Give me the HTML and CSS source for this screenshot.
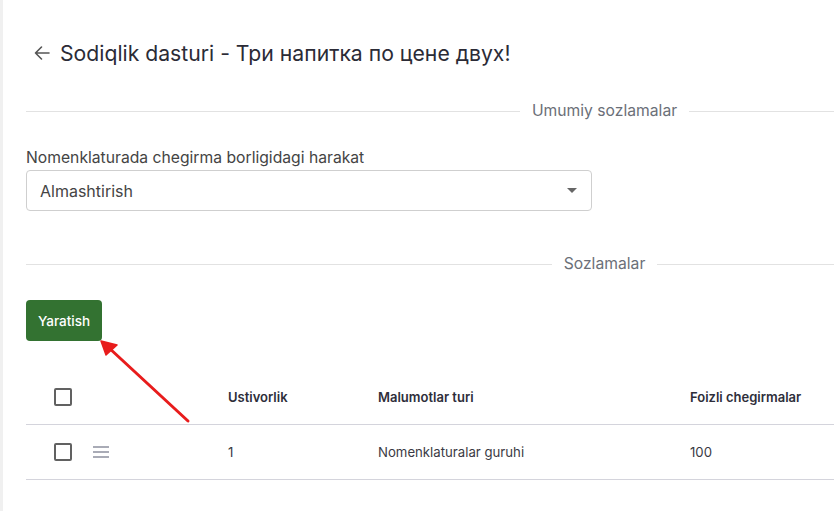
FILE: index.html
```html
<!DOCTYPE html>
<html lang="en">
<head>
<meta charset="UTF-8">
<title>Sodiqlik dasturi</title>
<link rel="stylesheet" href="styles.css">
</head>
<body>
<div class="page">
    <div class="content">
        <div class="title-row">
            <svg class="back" width="18" height="18" viewBox="0 0 18 18">
                <path d="M16 9H2.5M8.5 3L2.5 9l6 6" fill="none" stroke="#555" stroke-width="1.6" stroke-linecap="round" stroke-linejoin="round"/>
            </svg>
            <h1>Sodiqlik dasturi - Три напитка по цене двух!</h1>
        </div>

        <div class="divider"><span class="line"></span><span class="divider-label">Umumiy sozlamalar</span><span class="line"></span></div>

        <div class="form-grid">
            <div class="field">
                <label class="field-label">Nomenklaturada chegirma borligidagi harakat</label>
                <div class="select">
                    <span>Almashtirish</span>
                    <span class="caret"></span>
                </div>
            </div>
        </div>

        <div class="divider second"><span class="line"></span><span class="divider-label">Sozlamalar</span><span class="line"></span></div>

        <button class="btn-create">Yaratish</button>

        <div class="table">
            <div class="tr head">
                <div class="td first"><span class="checkbox"></span></div>
                <div class="td">Ustivorlik</div>
                <div class="td">Malumotlar turi</div>
                <div class="td">Foizli chegirmalar</div>
            </div>
            <div class="tr">
                <div class="td first"><span class="checkbox"></span><span class="drag"><i></i><i></i><i></i></span></div>
                <div class="td">1</div>
                <div class="td">Nomenklaturalar guruhi</div>
                <div class="td">100</div>
            </div>
        </div>
    </div>

    <!-- annotation arrow -->
    <svg class="pointer" width="120" height="110" viewBox="0 0 120 110">
        <line x1="107" y1="101" x2="27" y2="27" stroke="#e81c1c" stroke-width="3" stroke-linecap="round"/>
        <path d="M20 21L36 25L25 35Z" fill="#e81c1c" stroke="#e81c1c" stroke-width="1.5" stroke-linejoin="round"/>
    </svg>
</div>
</body>
</html>
```

FILE: styles.css
```css
html, body {
    margin: 0;
    background: #fff;
    overflow: hidden;
}
body {
    font-family: "Inter", "Roboto", sans-serif;
    color: #333;
}
.page {
    position: relative;
    min-height: 511px;
    border-left: 3px solid #f0f0f0;
    padding-left: 23px;
}
.content {
    width: 1157px;
}
.title-row {
    display: flex;
    align-items: center;
    gap: 9px;
    padding-top: 40px;
    padding-left: 7px;
}
.back { display: block; }
h1 {
    margin: 0;
    font-size: 21.2px;
    line-height: 26px;
    font-weight: 400;
    color: #2b2b36;
}
.divider {
    display: flex;
    align-items: center;
    gap: 12px;
    margin-top: 35px;
}
.divider.second { margin-top: 43px; }
.divider .line {
    flex: 1;
    height: 1px;
    background: #e2e2e2;
}
.divider-label {
    font-size: 15.7px;
    line-height: 20px;
    color: #6b6f78;
}
.form-grid {
    display: grid;
    grid-template-columns: 566px 1fr;
    margin-top: 27px;
}
.field-label {
    display: block;
    font-size: 15.7px;
    line-height: 20px;
    color: #444;
    margin-bottom: 2px;
}
.select {
    display: flex;
    align-items: center;
    justify-content: space-between;
    height: 39px;
    border: 1px solid #cfcfcf;
    border-radius: 4px;
    padding: 0 14px 0 13px;
    font-size: 16px;
    color: #444;
}
.caret {
    width: 0;
    height: 0;
    border-left: 5px solid transparent;
    border-right: 5px solid transparent;
    border-top: 5px solid #666;
}
.btn-create {
    display: block;
    margin-top: 26px;
    width: 76px;
    height: 41px;
    border: none;
    border-radius: 4px;
    background: #337231;
    color: #fff;
    font-family: "Inter", "Roboto", sans-serif;
    font-size: 13.5px;
    font-weight: 500;
    padding: 0;
}
.table {
    margin-top: 29px;
}
.tr {
    display: grid;
    grid-template-columns: 202px 150px 312px 1fr;
    align-items: center;
    height: 54px;
    border-bottom: 1px solid #d4d4dc;
    font-size: 13.2px;
    color: #3a3a44;
}
.tr.head {
    font-weight: 600;
    font-size: 13px;
    color: #2e2e3a;
}
.td.first {
    display: flex;
    align-items: center;
    gap: 21px;
    padding-left: 28px;
}
.checkbox {
    width: 14px;
    height: 14px;
    border: 2px solid #616161;
    border-radius: 2px;
}
.drag {
    display: flex;
    flex-direction: column;
    gap: 3px;
    width: 16px;
}
.drag i {
    display: block;
    height: 2px;
    background: #a9abb6;
}
.pointer {
    position: absolute;
    left: 78px;
    top: 320px;
}
```
